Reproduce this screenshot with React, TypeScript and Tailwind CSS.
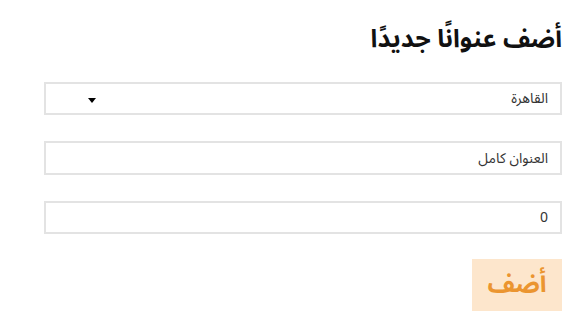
import React from "react";

export default function App() {
  const font = { fontFamily: '"Noto Sans Arabic", "DejaVu Sans", "Noto Sans", sans-serif' };
  return (
    <div dir="rtl" className="w-[586px] h-[335px] bg-white pr-[24px] pl-[44px] pt-[21px]" style={font}>
      <h1 className="text-[25px] font-bold text-[#111] leading-[37px] mb-[24px]">أضف عنوانًا جديدًا</h1>
      <div className="flex flex-col gap-[26px]">
        <div className="relative h-[33px] border-2 border-[#e3e3e3] flex items-center pr-[12px]">
          <span className="text-[14px] text-[#333]">القاهرة</span>
          <span className="absolute left-[42px] top-[14px] w-0 h-0 border-l-[4px] border-r-[4px] border-t-[5px] border-l-transparent border-r-transparent border-t-black"></span>
        </div>
        <div className="h-[34px] border-2 border-[#e3e3e3] flex items-center pr-[12px]">
          <span className="text-[14px] text-[#333]">العنوان كامل</span>
        </div>
        <div className="h-[33px] border-2 border-[#e3e3e3] flex items-center pr-[12px]">
          <span className="text-[14px] text-[#333]">0</span>
        </div>
      </div>
      <div className="mt-[25px] flex">
        <div className="w-[90px] h-[52px] bg-[#fde6cc] flex items-center justify-center text-[25px] font-bold text-[#eb9530]">أضف</div>
      </div>
    </div>
  );
}
